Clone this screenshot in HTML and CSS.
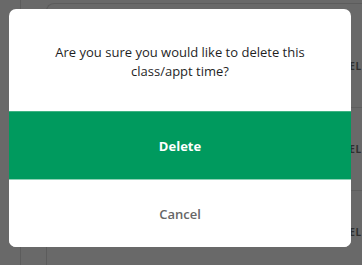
FILE: index.html
```html
<!DOCTYPE html>
<html>
<head>
    <title>Delete time</title>
    <link rel="stylesheet" href="styles.css">
</head>
<body>
    <div class="page">
        <div class="sidebar"></div>
        <div class="panel">
            <div class="panel-head"></div>
            <div class="row"><span class="row-action">CANCEL</span></div>
            <div class="row"><span class="row-action">CANCEL</span></div>
            <div class="row"><span class="row-action">CANCEL</span></div>
        </div>
    </div>

    <div class="modal">
        <div class="modal-message">
            <p>Are you sure you would like to delete this class/appt time?</p>
        </div>
        <button class="btn btn-delete">Delete</button>
        <button class="btn btn-cancel">Cancel</button>
    </div>
</body>
</html>
```

FILE: styles.css
```css
body
{
    margin: 0;
    width: 362px;
    height: 265px;
    overflow: hidden;
    background-color: #696969;
    font-family: "Open Sans", "Liberation Sans", sans-serif;
}

.page
{
    display: flex;
    height: 265px;
}

.sidebar
{
    width: 20px;
    border-right: 1px solid #5c5c5c;
}

.panel
{
    flex: 1;
    margin-top: 3px;
    margin-left: 25px;
    border-top: 1px solid #5c5c5c;
    border-left: 1px solid #5c5c5c;
    border-top-left-radius: 8px;
}

.panel-head
{
    height: 21px;
}

.row
{
    height: 82px;
    border-bottom: 1px solid #5e5e5e;
    display: flex;
    align-items: center;
    justify-content: flex-end;
}

.row-action
{
    font-size: 10px;
    font-weight: 700;
    color: #2f2f2f;
    margin-right: 0;
    letter-spacing: 0.8px;
}

.modal
{
    position: absolute;
    left: 9px;
    top: 9px;
    width: 342px;
    height: 238px;
    background: white;
    border-radius: 7px;
    overflow: hidden;
    display: flex;
    flex-direction: column;
}

.modal-message
{
    height: 102px;
    box-sizing: border-box;
    display: flex;
    align-items: center;
    justify-content: center;
    padding: 4px 20px 0;
}

.modal-message p
{
    margin: 0;
    text-align: center;
    font-size: 13px;
    line-height: 19px;
    color: #1f1f1f;
}

.btn
{
    height: 68px;
    border: none;
    margin: 0;
    padding: 0;
    font-family: "Open Sans", "Liberation Sans", sans-serif;
    font-size: 13px;
    cursor: pointer;
}

.btn-delete
{
    background-color: #009a5e;
    border-top: 1px solid #3fb383;
    color: white;
    font-weight: 700;
}

.btn-cancel
{
    background-color: white;
    border-top: 1px solid #8fd1b5;
    color: #666666;
    font-weight: 600;
}
```
